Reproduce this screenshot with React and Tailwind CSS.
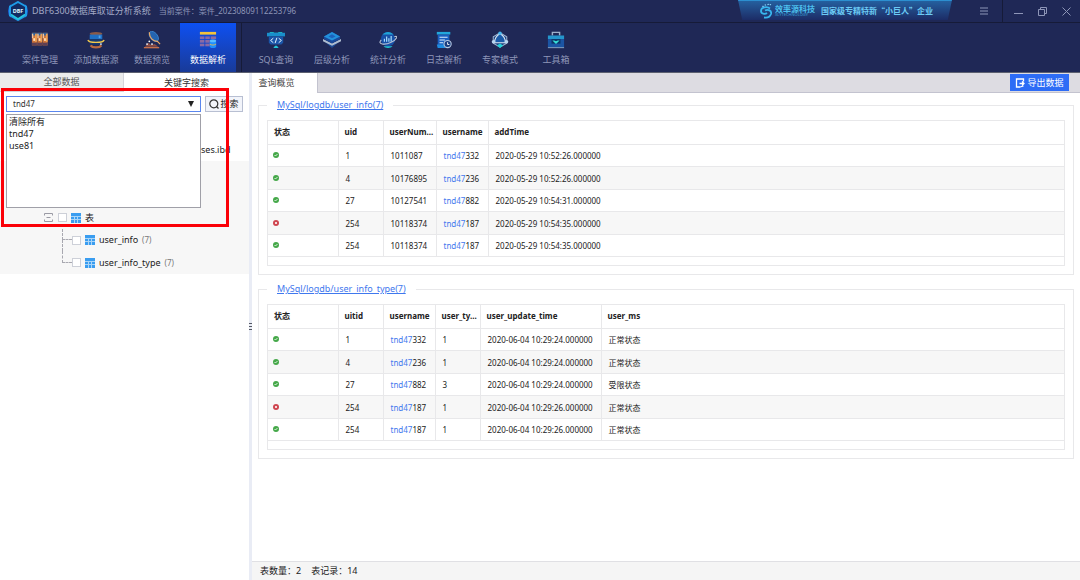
import { useState } from "react";

const LOGO_HEX = "10,1 18,5.5 18,14.5 10,19 2,14.5 2,5.5";

function AppLogo() {
  return (
    <svg viewBox="0 0 20 20" className="h-5 w-5" aria-hidden="true">
      <path d="M3 4C0 7 0 13 3 16M17 4c3 3 3 9 0 12" fill="none" stroke="#1c62d8" strokeWidth="1.5" />
      <polygon points={LOGO_HEX} fill="#122a62" stroke="#1e9be8" strokeWidth="2" />
      <path d="M3 13.5l7 4.5 7-4.5" fill="none" stroke="#28c8dc" strokeWidth="1.5" />
      <text x="10" y="12" textAnchor="middle" fontSize="5.5" fontWeight="700" fill="#dff4ff" fontFamily="Noto Sans, sans-serif">
        DBF
      </text>
    </svg>
  );
}

function BrandMark() {
  return (
    <svg viewBox="0 0 14 16" className="h-4 w-3.5" fill="none" stroke="#38b6ee" aria-hidden="true">
      <path d="M11 5.5C8 3 2 4 2 8c0 3 4 3.500 6 2" strokeWidth="1.800" />
      <path d="M6 7.500c3-1.500 7 0 6 3.500-1 3-4 4-7 3.500" strokeWidth="1.800" />
      <path d="M3.500 3l1 .8M6 1.500l.6 1M9 .8l.3 1.200M11.500 1.200l-.2 1" strokeWidth="1.400" stroke="#8fdcff" />
    </svg>
  );
}

function CaseIcon() {
  return (
    <>
      {[1, 7, 13].map((x) => (
        <g key={x}>
          <rect x={x} y="2" width="5.500" height="14" fill="#c8703a" />
          <rect x={x} y="2" width="5.500" height="3" fill="#2b5f9c" />
          <rect x={x} y="3" width="1.500" height="5" fill="#f3c69a" />
          <rect x={x + 3.5} y="3" width="2" height="9" fill="#f0a050" />
          <rect x={x + 1.5} y="8" width="2" height="3" fill="#ffe0b8" />
          <rect x={x} y="13" width="5.500" height="3" fill="#5d3f55" />
        </g>
      ))}
    </>
  );
}

function AddSourceIcon() {
  return (
    <>
      <ellipse cx="10" cy="3" rx="7" ry="2" fill="#8a5a48" />
      <rect x="3" y="4" width="14" height="5" fill="#1f6fc4" />
      <rect x="3" y="9" width="14" height="6" fill="#163a70" />
      <rect x="13" y="5" width="2" height="3" fill="#56a4e6" />
      <path d="M1 10c1 3.500 17 3.500 18 0" fill="none" stroke="#f3c94c" strokeWidth="1.500" />
      <path d="M4 16c2 3 10 3 12 0" fill="none" stroke="#b8693f" strokeWidth="2.500" />
      <circle cx="15.500" cy="14.500" r="1" fill="#e8f0ff" />
    </>
  );
}

function PreviewIcon() {
  return (
    <>
      <ellipse cx="12" cy="6" rx="6.500" ry="4" transform="rotate(50 12 6)" fill="#2464b0" stroke="#3b80c8" />
      <path d="M7 1.500c0 6 4 10 9 10l3 3" fill="none" stroke="#f0a860" strokeWidth="1.300" />
      <path d="M6 13l-4 4.500h15l-4-3-4 1z" fill="#8a4c45" />
      <path d="M1 18.500h17" stroke="#c8704b" strokeWidth="1.500" />
      <circle cx="7" cy="11.500" r="1" fill="#fff" />
      <circle cx="4.500" cy="14.500" r="1" fill="#fff" />
      <circle cx="10" cy="14.500" r="1" fill="#fff" />
    </>
  );
}

function ParseIcon() {
  return (
    <>
      <rect x="1" y="1" width="18" height="3" fill="#f3c33c" />
      {[6, 10, 14].map((y) => (
        <g key={y} fill="#8a6aa4">
          <rect x="1" y={y} width="5" height="3" />
          <rect x="7" y={y} width="5" height="3" />
          <rect x="13" y={y} width="6" height="3" />
        </g>
      ))}
      <rect x="12" y="10" width="7" height="9" rx="2" fill="#1f8fff" />
      <ellipse cx="15.500" cy="11" rx="3.500" ry="1.500" fill="#58bbff" />
      <path d="M12 14.500c2 1.500 5 1.500 7 0" fill="none" stroke="#e8b84a" />
    </>
  );
}

function SqlIcon() {
  return (
    <>
      <path d="M3 1h4l1 1h4l1-1h4v2H3z" fill="#1fb8c4" />
      <rect x="0" y="2" width="20" height="4" fill="#1a8fcb" />
      <path d="M2 6h16v7l-2 2H4l-2-2z" fill="#1b55a8" />
      <path d="M7 8l-3 2.500L7 13M13 8l3 2.500-3 2.500M11 7.500l-2 6" fill="none" stroke="#e4f5ff" strokeWidth="1.100" />
      <path d="M7 19l2-2.500h2l2 2.500z" fill="#20c6d8" />
    </>
  );
}

function LevelIcon() {
  return (
    <>
      <path d="M2 12l8 7 8-7v-2l-8 4-8-4z" fill="#1c4a96" />
      <path d="M0 9l10 5 10-5v2.500l-10 5-10-5z" fill="#aebccf" />
      <path d="M10 1l9 5v3l-9 4.500L1 9V6z" fill="#184a9c" />
      <path d="M10 1l9 5-9 4.500L1 6z" fill="#2391dc" />
      <path d="M10 3.500l4 2.500-4 2-4-2z" fill="#1c62bd" />
    </>
  );
}

function StatsIcon() {
  return (
    <>
      <circle cx="10" cy="9" r="8" fill="#174fa6" />
      <path d="M4 4c3-4 9-4 12 0z" fill="#1fa3d6" />
      <path d="M6 12V8.500M8.500 12V6M11 12V8M13.500 12V5.500" stroke="#a9dfff" strokeWidth="1.300" />
      <path d="M2.500 10c-5 5 4 6 11 2.500s8-8 3.500-6" fill="none" stroke="#b4c0d4" strokeWidth="1.200" />
      <path d="M5 17h10c-2 2.500-8 2.500-10 0z" fill="#20c6d8" />
    </>
  );
}

function LogIcon() {
  return (
    <>
      <path d="M2 1h15v3H2z" fill="#22a7dc" />
      <rect x="3" y="4" width="13" height="12" fill="#1a5fc0" />
      <path d="M2 15h9l1 4H3z" fill="#1f8be0" />
      <path d="M5 7h9M5 10h6M5 13h4" stroke="#d7eeff" strokeWidth="1.200" />
      <circle cx="14" cy="14.500" r="4" fill="#173c80" stroke="#b5c6df" strokeWidth="1.200" />
      <path d="M14 12.500V15h2" fill="none" stroke="#fff" />
    </>
  );
}

function ExpertIcon() {
  return (
    <>
      <path d="M10 2l7.500 4.500v7L10 18l-7.500-4.500v-7z" fill="#1a3f7e" stroke="#9fb4d0" strokeWidth="1.200" />
      <path d="M10 3c-4 2-6 6-6 10h12c0-4-2-8-6-10z" fill="#1a5aa8" stroke="#dce8f5" strokeWidth="1.200" />
      <circle cx="10" cy="2.500" r="2" fill="#49b8f0" />
      <circle cx="2.800" cy="12" r="2" fill="#b6d5ef" />
      <circle cx="17.200" cy="12" r="2" fill="#b6d5ef" />
      <path d="M6.500 16l3.500-2 3.500 2-3.500 3z" fill="#20d0d8" />
    </>
  );
}

function ToolboxIcon() {
  return (
    <>
      <path d="M6 5V1.500h8V5" fill="none" stroke="#9eb0ca" strokeWidth="1.600" />
      <rect x="1" y="5" width="18" height="4" fill="#2496cc" />
      <rect x="1" y="9" width="18" height="9" fill="#1b55a4" />
      <rect x="5" y="9" width="10" height="5" fill="#0d3567" />
      <path d="M6 10.500h2l2 1 2-1h2l-4 4z" fill="#37e0d8" />
      <path d="M1 18.500h18" stroke="#8fb0d0" />
    </>
  );
}

const mainTools = [
  { label: "案件管理", icon: CaseIcon },
  { label: "添加数据源", icon: AddSourceIcon },
  { label: "数据预览", icon: PreviewIcon },
  { label: "数据解析", icon: ParseIcon, active: true },
];

const extraTools = [
  { label: "SQL查询", icon: SqlIcon },
  { label: "层级分析", icon: LevelIcon },
  { label: "统计分析", icon: StatsIcon },
  { label: "日志解析", icon: LogIcon },
  { label: "专家模式", icon: ExpertIcon },
  { label: "工具箱", icon: ToolboxIcon },
];

const userInfo = {
  title: "MySql/logdb/user_info(7)",
  columns: ["状态", "uid", "userNum...", "username", "addTime"],
  widths: ["w-[70px]", "w-[45px]", "w-[53px]", "w-[52px]", ""],
  rows: [
    [true, "1", "1011087", "tnd47332", "2020-05-29 10:52:26.000000"],
    [true, "4", "10176895", "tnd47236", "2020-05-29 10:52:26.000000"],
    [true, "27", "10127541", "tnd47882", "2020-05-29 10:54:31.000000"],
    [false, "254", "10118374", "tnd47187", "2020-05-29 10:54:35.000000"],
    [true, "254", "10118374", "tnd47187", "2020-05-29 10:54:35.000000"],
  ],
};

const userInfoType = {
  title: "MySql/logdb/user_info_type(7)",
  columns: ["状态", "uitid", "username", "user_ty...", "user_update_time", "user_ms"],
  widths: ["w-[70px]", "w-[45px]", "w-[52px]", "w-[45px]", "w-[121px]", ""],
  rows: [
    [true, "1", "tnd47332", "1", "2020-06-04 10:29:24.000000", "正常状态"],
    [true, "4", "tnd47236", "1", "2020-06-04 10:29:24.000000", "正常状态"],
    [true, "27", "tnd47882", "3", "2020-06-04 10:29:24.000000", "受限状态"],
    [false, "254", "tnd47187", "1", "2020-06-04 10:29:26.000000", "正常状态"],
    [true, "254", "tnd47187", "1", "2020-06-04 10:29:26.000000", "正常状态"],
  ],
};

function TitleBar() {
  return (
    <header className="flex h-[23px] shrink-0 items-center border-b border-[#161b38] pl-2 text-[#8e96b8]">
      <AppLogo />
      <h1 className="ml-1 text-[9px] whitespace-nowrap text-[#a3aac6]">DBF6300数据库取证分析系统</h1>
      <span className="ml-2 text-[8px] whitespace-nowrap">当前案件：案件_20230809112253796</span>
      <div className="ml-auto flex h-5 w-[214px] items-center self-start border-t border-[#2c8fd0] bg-linear-to-b from-[#24609f] to-[#1c2c66] pl-[21px] [clip-path:polygon(0_0,100%_0,98%_100%,2%_100%)]">
        <BrandMark />
        <div className="ml-0.5 flex flex-col">
          <span className="text-[8px] leading-[9px] font-bold text-[#4cc0ee]">效率源科技</span>
          <span className="text-[4px] leading-[4px] text-[#3aa0d8]">XLYTECHNOLOGY</span>
        </div>
        <span className="ml-1.5 font-['Noto_Sans_CJK_SC',sans-serif] text-[8px] font-bold whitespace-nowrap text-[#6ccbf5]">
          国家级专精特新“小巨人”企业
        </span>
      </div>
      <button aria-label="菜单" className="ml-6 flex h-full w-[26px] items-center justify-start pl-1">
        <svg viewBox="0 0 8 8" className="h-2 w-2" stroke="currentColor">
          <path d="M0 1h8M0 4h8M0 7h8" />
        </svg>
      </button>
      <div className="flex h-full items-center gap-[15px] border-l border-[#161b38] pr-[9px] pl-[11px]">
        <button aria-label="最小化">
          <svg viewBox="0 0 9 9" className="h-[9px] w-[9px]" stroke="currentColor">
            <path d="M0 6.500h9" />
          </svg>
        </button>
        <button aria-label="还原">
          <svg viewBox="0 0 9 9" className="h-[9px] w-[9px]" fill="none" stroke="currentColor">
            <path d="M.5 2.500h6v6h-6zM2.500 2.500v-2h6v6h-2" />
          </svg>
        </button>
        <button aria-label="关闭">
          <svg viewBox="0 0 9 9" className="h-[9px] w-[9px]" stroke="currentColor">
            <path d="M.5.5l8 8M8.500.5l-8 8" />
          </svg>
        </button>
      </div>
    </header>
  );
}

function ToolButton({ label, icon: Icon, active }) {
  return (
    <button
      className={`flex w-14 flex-col items-center gap-1 pt-2 text-[9px] leading-[14px] whitespace-nowrap ${
        active ? "bg-linear-to-b from-[#0c50f2] to-[#183a98] text-white" : "text-[#8e96b8]"
      }`}
    >
      <svg viewBox="0 0 20 20" className="h-[18px] w-[18px]" aria-hidden="true">
        <Icon />
      </svg>
      {label}
    </button>
  );
}

function Toolbar() {
  return (
    <nav className="flex h-[50px] shrink-0 border-b border-[#5c6070] pl-3">
      {mainTools.map((tool) => (
        <ToolButton key={tool.label} {...tool} />
      ))}
      <div className="mr-1.5 ml-[5px] w-px bg-[#161b38]" />
      {extraTools.map((tool) => (
        <ToolButton key={tool.label} {...tool} />
      ))}
    </nav>
  );
}

function TableIcon() {
  return (
    <svg viewBox="0 0 10 10" className="h-2.5 w-2.5 shrink-0" aria-hidden="true">
      <rect y="1" width="10" height="9" fill="#a9d5f8" />
      <path d="M0 0h10v3H0zM0 4h3v2H0zM4 4h2v2H4zM7 4h3v2H7zM0 7h3v3H0zM4 7h2v3H4zM7 7h3v3H7z" fill="#3a9df0" />
    </svg>
  );
}

function TreeCheck({ label }) {
  return (
    <input
      type="checkbox"
      aria-label={label}
      className="h-[9px] w-[9px] shrink-0 appearance-none border border-[#cdd0d8] bg-white"
    />
  );
}

function TreeLeaf({ name, count, last }) {
  return (
    <li className="flex items-center bg-[#f7f7f7] pl-[62px]">
      <div className="flex h-full w-2.5 flex-col">
        <div className="h-1/2 border-b border-l border-dashed border-[#a8a8b0]" />
        <div className={`h-1/2 border-dashed border-[#a8a8b0] ${last ? "" : "border-l"}`} />
      </div>
      <label className="flex items-center gap-1 whitespace-nowrap">
        <TreeCheck label={name} />
        <TableIcon />
        <span>{name}</span>
        <span className="text-[8px] text-[#777]">({count})</span>
      </label>
    </li>
  );
}

function Sidebar() {
  const [keyword, setKeyword] = useState("tnd47");

  return (
    <aside className="relative flex w-[249px] shrink-0 flex-col bg-white text-[9px] text-[#222]">
      <div className="flex h-[19px] text-[#555]">
        <button className="w-[124px] border-r border-b border-[#d4d4da] bg-[#ebebeb]">全部数据</button>
        <button className="flex-1 text-[#333]">关键字搜索</button>
      </div>
      <div className="flex h-5 items-end gap-1 pr-1.5 pl-1.5">
        <div className="flex h-4 flex-1 items-center border border-[#5a86ee] bg-white px-1.5">
          <input
            aria-label="关键字"
            className="w-full text-[8px] text-[#333] outline-none"
            value={keyword}
            onChange={(e) => setKeyword(e.target.value)}
          />
          <button aria-label="展开" className="shrink-0">
            <svg viewBox="0 0 6 6" className="h-1.5 w-1.5" fill="#222">
              <path d="M0 0h6L3 6z" />
            </svg>
          </button>
        </div>
        <button className="flex h-4 w-[38px] items-center justify-center gap-px border border-[#b8bfd2] bg-[#f2f4fa] whitespace-nowrap">
          <svg viewBox="0 0 10 10" className="h-2.5 w-2.5" fill="none" stroke="#333" strokeWidth="1.200">
            <circle cx="4.800" cy="4.800" r="4" />
            <path d="M7.500 7.500l2 2" />
          </svg>
          搜索
        </button>
      </div>
      <ul className="mt-1 grid h-[158px] grid-rows-7">
        <li />
        <li className="flex items-center pl-[201px]">ses.ibd</li>
        <li className="bg-[#f7f7f7]" />
        <li className="bg-[#f7f7f7]" />
        <li className="flex items-center gap-1 bg-[#f7f7f7] pl-11">
          <button aria-label="收起" className="mr-px">
            <svg viewBox="0 0 9 9" className="h-[9px] w-[9px]" fill="none" stroke="#9a9aa4">
              <path d="M.5 2.500v-2h8v2M.5 6.500v2h8v-2M2.500 4.500h4" />
            </svg>
          </button>
          <label className="flex items-center gap-1">
            <TreeCheck label="表" />
            <TableIcon />
            表
          </label>
        </li>
        <TreeLeaf name="user_info" count={7} />
        <TreeLeaf name="user_info_type" count={7} last />
      </ul>

      {/* keyword history */}
      <ul
        role="listbox"
        aria-label="搜索历史"
        className="absolute top-[41px] left-1.5 h-[94px] w-[195px] border border-[#a0a0a8] bg-white px-0.5 pt-px leading-3"
      >
        {["清除所有", "tnd47", "use81"].map((item) => (
          <li key={item} role="option" aria-selected={item === keyword} onClick={() => setKeyword(item)}>
            {item}
          </li>
        ))}
      </ul>
      <div className="pointer-events-none absolute top-[15px] left-px h-[139px] w-[228px] border-[3px] border-[#fb0007]" />
    </aside>
  );
}

function StatusDot({ ok }) {
  return (
    <svg viewBox="0 0 6 6" className="h-1.5 w-1.5" role="img" aria-label={ok ? "正常" : "已删除"}>
      <circle cx="3" cy="3" r="3" fill={ok ? "#45a849" : "#cf4650"} />
      {ok ? (
        <path d="M1.500 3l1 1 2-2" fill="none" stroke="#fff" strokeWidth=".8" />
      ) : (
        <path d="M2 2l2 2M4 2L2 4" stroke="#fff" strokeWidth=".8" />
      )}
    </svg>
  );
}

function Cell({ value }) {
  if (typeof value === "boolean") return <StatusDot ok={value} />;
  if (value.startsWith("tnd47")) {
    return (
      <>
        <span className="text-[#3f78ee]">tnd47</span>
        {value.slice(5)}
      </>
    );
  }
  return value;
}

function ResultGroup({ title, columns, widths, rows }) {
  return (
    <fieldset className="min-w-0 border border-[#e8e8ea] px-2 pb-2">
      <legend className="px-2.5 text-[9px] leading-4">
        <a href="#" className="text-[#3f78ee] underline">
          {title}
        </a>
      </legend>
      <div className="mt-[7px] border border-[#e8e8ea] pb-2">
        <table className="h-[136px] w-full table-fixed text-left text-[8px] leading-3 text-[#222]">
          <thead>
            <tr className="h-[23px] border-b border-[#e8e8ea]">
              {columns.map((name, i) => (
                <th
                  key={name}
                  className={`border-r border-[#e8e8ea] pl-1.5 font-bold whitespace-nowrap last:border-r-0 ${widths[i]}`}
                >
                  {name}
                </th>
              ))}
            </tr>
          </thead>
          <tbody>
            {rows.map((row, r) => (
              <tr key={r} className="border-b border-[#e8e8ea] even:bg-[#f7f7f7]">
                {row.map((value, c) => (
                  <td
                    key={c}
                    className="border-r border-[#e8e8ea] pt-0.5 pl-[7px] whitespace-nowrap first:pt-0 first:pl-[5px] last:border-r-0"
                  >
                    <Cell value={value} />
                  </td>
                ))}
              </tr>
            ))}
          </tbody>
        </table>
      </div>
    </fieldset>
  );
}

function Results() {
  return (
    <main className="flex min-w-0 flex-1 flex-col bg-white">
      <div className="flex h-5 shrink-0 text-[9px]">
        <button className="w-[65px] pr-4 text-[#444]">查询概览</button>
        <div className="flex flex-1 items-center justify-end border-b border-l border-[#c3c3cf] bg-[#dddce2] pr-[11px]">
          <button className="flex h-[17px] w-[59px] items-center justify-center gap-0.5 bg-[#2d6cf6] whitespace-nowrap text-white">
            <svg viewBox="0 0 10 10" className="h-2.5 w-2.5" fill="none" stroke="currentColor" strokeWidth="1.300">
              <path d="M8.500 3.500V1h-7v8H5M4.500 5.500H9M7 3.500l2 2-2 2M5 9l3.500-1" />
            </svg>
            导出数据
          </button>
        </div>
      </div>
      <div className="flex flex-1 flex-col gap-1.5 px-1.5 pt-1">
        <ResultGroup {...userInfo} />
        <ResultGroup {...userInfoType} />
      </div>
      <footer className="flex h-[19px] shrink-0 items-center gap-2.5 border-t border-[#e0e0e4] bg-[#f5f5f5] pl-2 text-[9px] text-[#222]">
        <span>表数量：2</span>
        <span>表记录：14</span>
      </footer>
    </main>
  );
}

export default function App() {
  return (
    <div className="flex h-screen flex-col bg-[#1f2856] font-['Noto_Sans','Noto_Sans_CJK_SC',sans-serif]">
      <TitleBar />
      <Toolbar />
      <div className="flex min-h-0 flex-1">
        <Sidebar />
        <div className="flex w-[3px] shrink-0 items-center bg-[#e9ecf5]">
          <svg viewBox="0 0 3 9" className="h-[9px] w-[3px]" stroke="#555a66" aria-hidden="true">
            <path d="M0 1.500h3M0 4.500h3M0 7.500h3" />
          </svg>
        </div>
        <Results />
      </div>
    </div>
  );
}
